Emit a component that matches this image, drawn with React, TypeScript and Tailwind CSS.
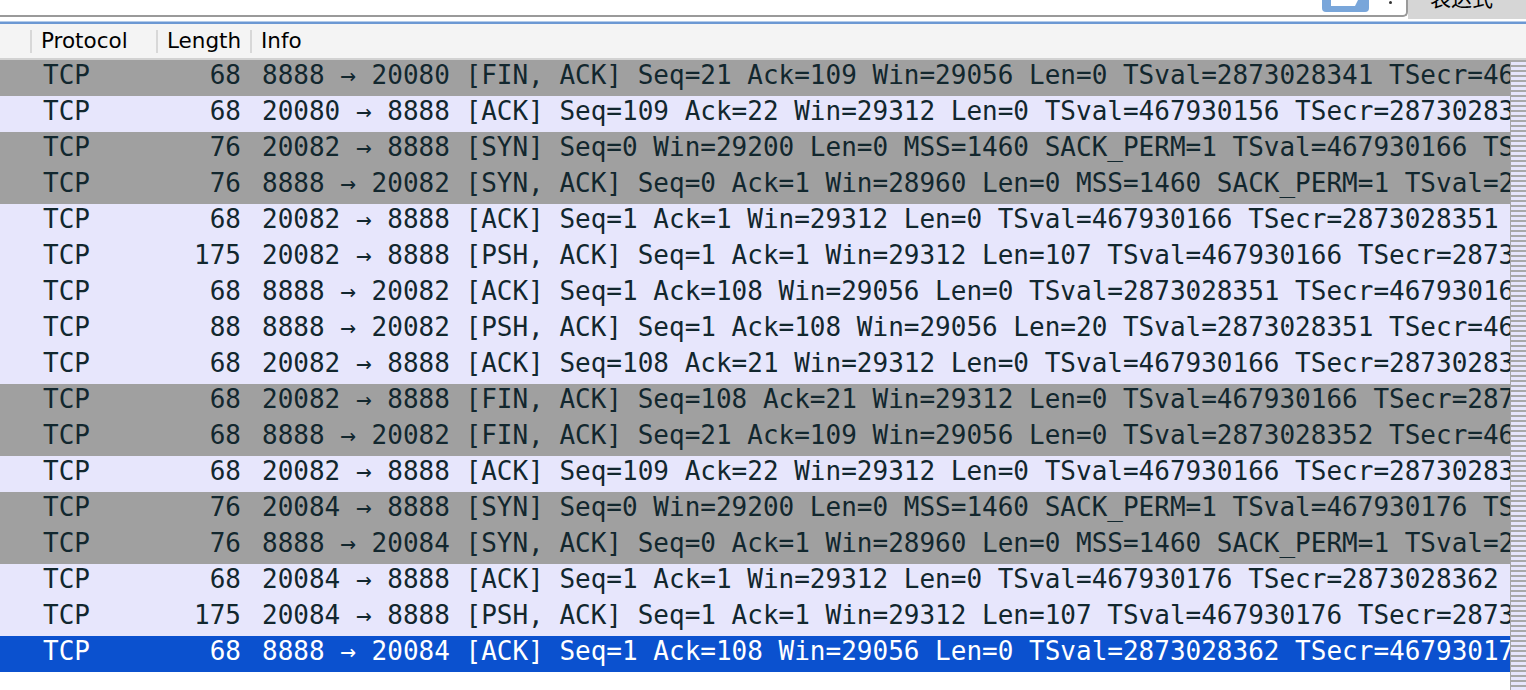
import React from 'react';

type Packet = {
  len: number;
  info: string;
  kind: 'flag' | 'tcp' | 'sel';
};

const packets: Packet[] = [
  { kind: 'flag', len: 68, info: '8888 → 20080 [FIN, ACK] Seq=21 Ack=109 Win=29056 Len=0 TSval=2873028341 TSecr=467930156' },
  { kind: 'tcp', len: 68, info: '20080 → 8888 [ACK] Seq=109 Ack=22 Win=29312 Len=0 TSval=467930156 TSecr=2873028341' },
  { kind: 'flag', len: 76, info: '20082 → 8888 [SYN] Seq=0 Win=29200 Len=0 MSS=1460 SACK_PERM=1 TSval=467930166 TSecr=0 WS=128' },
  { kind: 'flag', len: 76, info: '8888 → 20082 [SYN, ACK] Seq=0 Ack=1 Win=28960 Len=0 MSS=1460 SACK_PERM=1 TSval=2873028351 TSecr=467930166' },
  { kind: 'tcp', len: 68, info: '20082 → 8888 [ACK] Seq=1 Ack=1 Win=29312 Len=0 TSval=467930166 TSecr=2873028351' },
  { kind: 'tcp', len: 175, info: '20082 → 8888 [PSH, ACK] Seq=1 Ack=1 Win=29312 Len=107 TSval=467930166 TSecr=2873028351' },
  { kind: 'tcp', len: 68, info: '8888 → 20082 [ACK] Seq=1 Ack=108 Win=29056 Len=0 TSval=2873028351 TSecr=467930166' },
  { kind: 'tcp', len: 88, info: '8888 → 20082 [PSH, ACK] Seq=1 Ack=108 Win=29056 Len=20 TSval=2873028351 TSecr=467930166' },
  { kind: 'tcp', len: 68, info: '20082 → 8888 [ACK] Seq=108 Ack=21 Win=29312 Len=0 TSval=467930166 TSecr=2873028351' },
  { kind: 'flag', len: 68, info: '20082 → 8888 [FIN, ACK] Seq=108 Ack=21 Win=29312 Len=0 TSval=467930166 TSecr=2873028351' },
  { kind: 'flag', len: 68, info: '8888 → 20082 [FIN, ACK] Seq=21 Ack=109 Win=29056 Len=0 TSval=2873028352 TSecr=467930166' },
  { kind: 'tcp', len: 68, info: '20082 → 8888 [ACK] Seq=109 Ack=22 Win=29312 Len=0 TSval=467930166 TSecr=2873028352' },
  { kind: 'flag', len: 76, info: '20084 → 8888 [SYN] Seq=0 Win=29200 Len=0 MSS=1460 SACK_PERM=1 TSval=467930176 TSecr=0 WS=128' },
  { kind: 'flag', len: 76, info: '8888 → 20084 [SYN, ACK] Seq=0 Ack=1 Win=28960 Len=0 MSS=1460 SACK_PERM=1 TSval=2873028362 TSecr=467930176' },
  { kind: 'tcp', len: 68, info: '20084 → 8888 [ACK] Seq=1 Ack=1 Win=29312 Len=0 TSval=467930176 TSecr=2873028362' },
  { kind: 'tcp', len: 175, info: '20084 → 8888 [PSH, ACK] Seq=1 Ack=1 Win=29312 Len=107 TSval=467930176 TSecr=2873028362' },
  { kind: 'sel', len: 68, info: '8888 → 20084 [ACK] Seq=1 Ack=108 Win=29056 Len=0 TSval=2873028362 TSecr=467930176' },
];

const rowStyle = {
  flag: 'bg-[#a0a0a0] text-[#12272e]',
  tcp: 'bg-[#e7e6fc] text-[#12272e]',
  sel: 'bg-[#0b51cf] text-white',
};

function Toolbar() {
  return (
    <div className="flex h-[19px]">
      {/* filter field, mostly scrolled out of view */}
      <div className="flex-1 h-[17px] bg-white border-b-2 border-r-2 border-[#9a9a9a] rounded-br-[5px] flex justify-end pr-[14px]">
        <div className="w-[47px] h-[12px] bg-[#79a6da] rounded-b-[4px] flex justify-center">
          <svg width="30" height="7" viewBox="0 0 30 7">
            <path d="M0 0 H22 L27 0 L24 6 H0 Z" fill="#fff" />
          </svg>
        </div>
        <div className="ml-[20px] mt-[1px] w-[3px] h-[3px] rounded-full bg-[#333]" />
      </div>
      <div className="w-[118px] h-[19px] bg-[#d6d6d6] overflow-hidden pl-[22px]">
        <div className="-mt-[16px] text-[21px] leading-[26px] text-black font-['Noto_Sans_CJK_SC','Noto_Sans',sans-serif]">
          表达式…
        </div>
      </div>
    </div>
  );
}

function Header() {
  const sep = <div className="w-[2px] h-[23px] bg-[#d8d8d8]" />;
  return (
    <div className="flex items-center h-[36px] bg-[#f4f4f4] border-b-2 border-[#d2d2d2] font-['DejaVu_Sans',sans-serif] text-[21.5px] text-black">
      <div className="w-[30px]" />
      {sep}
      <div className="w-[124px] pl-[9px]">Protocol</div>
      {sep}
      <div className="w-[92px] pl-[9px]">Length</div>
      {sep}
      <div className="flex-1 pl-[9px]">Info</div>
    </div>
  );
}

export default function App() {
  return (
    <div className="w-[1526px] h-[690px] bg-white overflow-hidden flex flex-col">
      <Toolbar />
      <div className="h-[2px] bg-white" />
      <div className="h-[1px] bg-[#b3cbea]" />
      <div className="h-[2px] bg-[#6c98d3]" />
      <Header />
      <div className="flex flex-1 min-h-0">
        <div className="w-[1510px] overflow-hidden font-['DejaVu_Sans_Mono',monospace] text-[26px] leading-[30px]">
          {packets.map((p, i) => (
            <div key={i} className={`flex h-[36px] pb-[6px] whitespace-pre ${rowStyle[p.kind]}`}>
              <div className="w-[32px] shrink-0" />
              <div className="w-[125px] shrink-0 pl-[11px]">TCP</div>
              <div className="w-[94px] shrink-0 pr-[10px] text-right">{p.len}</div>
              <div className="pl-[11px]">{p.info}</div>
            </div>
          ))}
        </div>
        <div className="w-[16px] border-l border-[#a6a6a6] bg-[repeating-linear-gradient(to_bottom,#a8a8a8_0px,#a8a8a8_2px,#e7e6fc_2px,#e7e6fc_5px)]" />
      </div>
    </div>
  );
}
